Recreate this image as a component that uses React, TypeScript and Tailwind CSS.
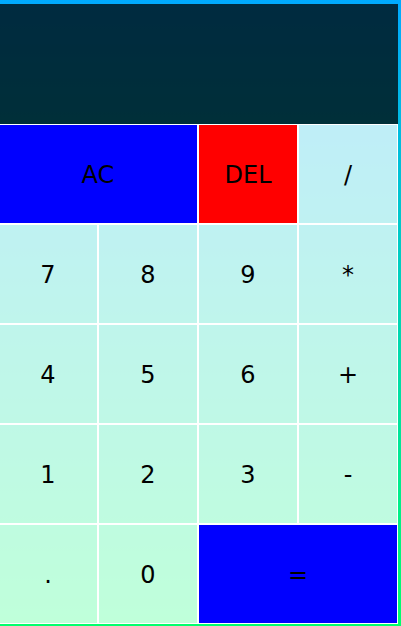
const keys = [
  { label: "7" },
  { label: "8" },
  { label: "9" },
  { label: "*" },
  { label: "4" },
  { label: "5" },
  { label: "6" },
  { label: "+" },
  { label: "1" },
  { label: "2" },
  { label: "3" },
  { label: "-" },
  { label: "." },
  { label: "0" },
];

const btn =
  "flex items-center justify-center border border-white pt-[2px] text-[24px] text-black cursor-pointer";

export default function App() {
  return (
    <div
      className="h-screen w-full overflow-hidden bg-[linear-gradient(to_bottom,#00aaff,#00ff6c)]"
      style={{ fontFamily: '"DejaVu Sans", Verdana, sans-serif' }}
    >
      <div className="ml-[-2px] mt-[4px] grid grid-cols-[repeat(4,100px)] grid-rows-[120px_repeat(5,100px)]">
        {/* output */}
        <div className="col-span-4 bg-black/75" />

        <button className={`${btn} col-span-2 bg-[#0000ff]`}>AC</button>
        <button className={`${btn} bg-[#ff0000]`}>DEL</button>
        <button className={`${btn} bg-white/75`}>/</button>

        {keys.map((k) => (
          <button key={k.label} className={`${btn} bg-white/75`}>
            {k.label}
          </button>
        ))}

        <button className={`${btn} col-span-2 bg-[#0000ff]`}>=</button>
      </div>
    </div>
  );
}
